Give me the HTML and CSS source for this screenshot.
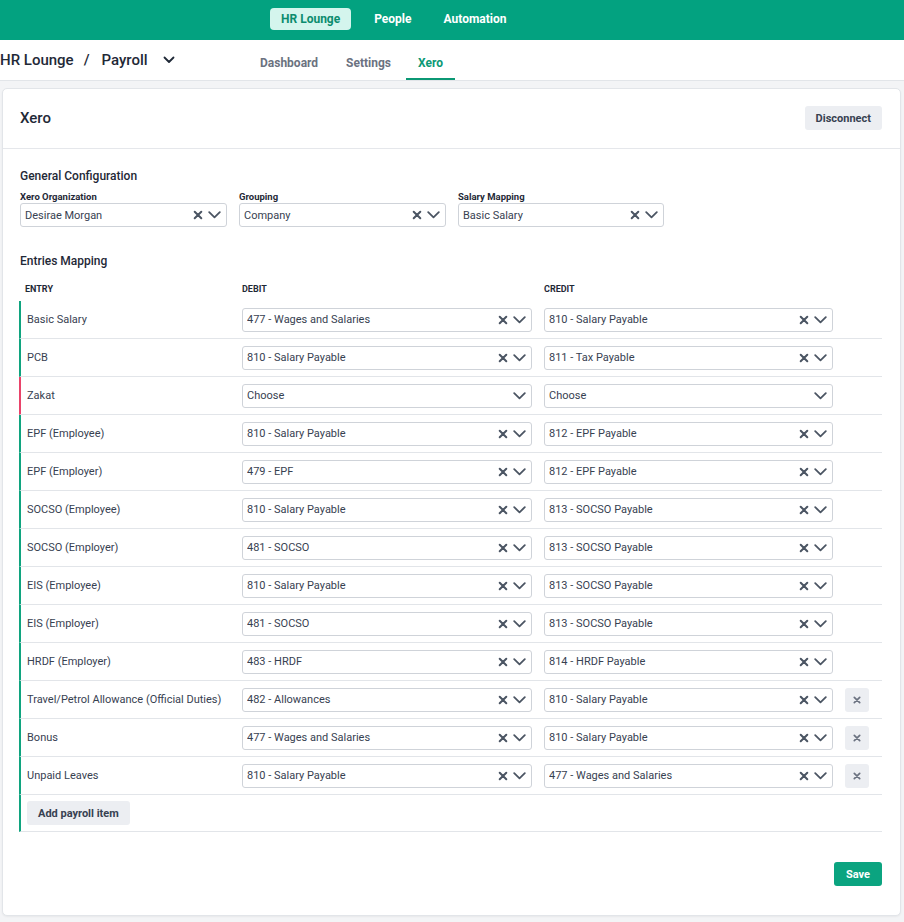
FILE: index.html
```html
<!DOCTYPE html>
<html>
<head>
<meta charset="utf-8">
<link rel="stylesheet" href="styles.css">
</head>
<body>
<header class="topbar">
  <nav class="mainnav">
    <span class="navitem active">HR Lounge</span>
    <span class="navitem">People</span>
    <span class="navitem">Automation</span>
  </nav>
</header>
<div class="subbar">
  <div class="crumbs">
    <span>HR Lounge</span><span class="sep">/</span><span>Payroll</span>
    <svg class="crumb-chev" width="12" height="8" viewBox="0 0 12 8"><polyline points="1.5,1.5 6,6 10.5,1.5" fill="none" stroke="#1f2937" stroke-width="1.8" stroke-linecap="round" stroke-linejoin="round"/></svg>
  </div>
  <div class="tabs">
    <span class="tab">Dashboard</span>
    <span class="tab">Settings</span>
    <span class="tab active">Xero</span>
  </div>
</div>
<main class="page">
  <section class="card">
    <div class="card-head">
      <h2>Xero</h2>
      <button class="btn btn-gray">Disconnect</button>
    </div>
    <div class="card-body">
      <h3>General Configuration</h3>
      <div class="config">
        <div class="field">
          <label>Xero Organization</label>
          <div class="select"><span>Desirae Morgan</span><i class="ic-x"></i><i class="ic-chev"></i></div>
        </div>
        <div class="field">
          <label>Grouping</label>
          <div class="select"><span>Company</span><i class="ic-x"></i><i class="ic-chev"></i></div>
        </div>
        <div class="field">
          <label>Salary Mapping</label>
          <div class="select"><span>Basic Salary</span><i class="ic-x"></i><i class="ic-chev"></i></div>
        </div>
      </div>
      <h3 class="mt">Entries Mapping</h3>
      <div class="grid head">
        <span>Entry</span><span>Debit</span><span>Credit</span><span></span>
      </div>
      <div class="rows" id="rows"></div>
      <div class="footer">
        <button class="btn btn-green">Save</button>
      </div>
    </div>
  </section>
</main>
<script src="app.js"></script>
</body>
</html>
```
FILE: app.js
```js
var data = [
  ["Basic Salary","477 - Wages and Salaries","810 - Salary Payable",0,0],
  ["PCB","810 - Salary Payable","811 - Tax Payable",0,0],
  ["Zakat","","",0,1],
  ["EPF (Employee)","810 - Salary Payable","812 - EPF Payable",0,0],
  ["EPF (Employer)","479 - EPF","812 - EPF Payable",0,0],
  ["SOCSO (Employee)","810 - Salary Payable","813 - SOCSO Payable",0,0],
  ["SOCSO (Employer)","481 - SOCSO","813 - SOCSO Payable",0,0],
  ["EIS (Employee)","810 - Salary Payable","813 - SOCSO Payable",0,0],
  ["EIS (Employer)","481 - SOCSO","813 - SOCSO Payable",0,0],
  ["HRDF (Employer)","483 - HRDF","814 - HRDF Payable",0,0],
  ["Travel/Petrol Allowance (Official Duties)","482 - Allowances","810 - Salary Payable",1,0],
  ["Bonus","477 - Wages and Salaries","810 - Salary Payable",1,0],
  ["Unpaid Leaves","810 - Salary Payable","477 - Wages and Salaries",1,0]
];
function sel(v){
  if(!v) return '<div class="select"><span>Choose</span><i class="ic-chev"></i></div>';
  return '<div class="select"><span>'+v+'</span><i class="ic-x"></i><i class="ic-chev"></i></div>';
}
var h = '';
data.forEach(function(r){
  h += '<div class="grid row'+(r[4]?' warn':'')+'"><span class="entry">'+r[0]+'</span>'+sel(r[1])+sel(r[2])+
    (r[3]?'<button class="del"><i class="ic-del"></i></button>':'<span></span>')+'</div>';
});
h += '<div class="row addrow"><button class="btn btn-gray add">Add payroll item</button></div>';
document.getElementById('rows').innerHTML = h;
```
FILE: styles.css
```css
* { box-sizing: border-box; }
html, body { margin: 0; padding: 0; }
body {
  font-family: Roboto, "Liberation Sans", Arial, sans-serif;
  background: #f3f4f6;
  color: #374151;
  width: 904px;
  height: 922px;
  overflow: hidden;
}
.topbar {
  height: 40px;
  background: #03a280;
  display: flex;
  align-items: center;
  padding-left: 270px;
  padding-bottom: 2px;
}
.mainnav { display: flex; gap: 10px; align-items: center; }
.navitem {
  font-size: 12px;
  font-weight: 700;
  color: #fff;
  padding: 4px 11px;
  border-radius: 4px;
  line-height: 14px;
}
.navitem.active { background: #d4f5ed; color: #0b8c6e; margin-right: 2px; }
.subbar {
  height: 41px;
  background: #fff;
  border-bottom: 1px solid #e2e5e9;
  display: flex;
  align-items: stretch;
}
.crumbs {
  width: 260px;
  display: flex;
  align-items: center;
  font-size: 15px;
  font-weight: 500;
  color: #1f2937;
  padding-bottom: 1px;
}
.crumbs .sep { margin: 0 12px 0 10px; }
.crumb-chev { margin-left: 15px; }
.tabs { display: flex; align-items: stretch; gap: 0; }
.tab {
  font-size: 12px;
  font-weight: 700;
  color: #6b7280;
  display: flex;
  align-items: center;
  padding: 7px 0 0 0;
  margin-right: 28px;
  border-bottom: 2px solid transparent;
}
.tab.active {
  color: #0b9874;
  border-bottom-color: #0b9874;
  padding: 7px 12px 0;
  margin-left: -13px;
}
.page { padding: 7px 3px 6px 2px; }
.card {
  background: #fff;
  border: 1px solid #e2e5e9;
  border-radius: 5px;
  height: 828px;
  box-shadow: 0 1px 2px rgba(0,0,0,0.05);
}
.card-head {
  height: 60px;
  border-bottom: 1px solid #e5e7eb;
  display: flex;
  align-items: center;
  justify-content: space-between;
  padding: 0 18px 1px 17px;
}
.card-head h2 {
  margin: 0;
  font-size: 15px;
  font-weight: 500;
  color: #1f2937;
}
.btn {
  font-family: inherit;
  border: 0;
  border-radius: 3px;
  font-size: 11px;
  font-weight: 700;
  height: 24px;
  padding: 0 11px;
  cursor: pointer;
}
.btn-gray { background: #eceef2; color: #374151; }
.btn-green { background: #0ba480; color: #fff; padding: 0 12px; }
.card-body { padding: 19px 18px 0 17px; }
h3 {
  margin: 0;
  font-size: 12px;
  font-weight: 500;
  line-height: 16px;
  color: #1f2937;
}
h3.mt { margin-top: 26px; }
.config {
  display: grid;
  grid-template-columns: 207px 207px 206px;
  column-gap: 12px;
  margin-top: 7px;
}
.field label {
  display: block;
  font-size: 9.5px;
  font-weight: 700;
  color: #1f2937;
  line-height: 12px;
  margin-bottom: 0;
}
.select {
  height: 24px;
  border: 1px solid #cfd3d9;
  border-radius: 3px;
  background: #fff;
  display: flex;
  align-items: center;
  padding: 0 5px 0 4px;
  font-size: 11px;
  color: #374151;
}
.select span { flex: 1; white-space: nowrap; overflow: hidden; }
.ic-x, .ic-chev, .ic-del { display: block; flex: none; background-repeat: no-repeat; background-position: center; }
.ic-x {
  width: 10px; height: 10px; margin-right: 5px;
  background-image: url("data:image/svg+xml,%3Csvg xmlns='http://www.w3.org/2000/svg' width='10' height='10' viewBox='0 0 10 10'%3E%3Cpath d='M1.7 1.7L8.3 8.3M8.3 1.7L1.7 8.3' stroke='%234b5563' stroke-width='2' stroke-linecap='round'/%3E%3C/svg%3E");
}
.ic-chev {
  width: 13px; height: 8px;
  background-image: url("data:image/svg+xml,%3Csvg xmlns='http://www.w3.org/2000/svg' width='13' height='8' viewBox='0 0 13 8'%3E%3Cpath d='M1.2 1.2L6.5 6.3L11.8 1.2' fill='none' stroke='%234b5563' stroke-width='1.8' stroke-linecap='round' stroke-linejoin='round'/%3E%3C/svg%3E");
}
.ic-del {
  width: 8px; height: 8px; margin: 0 auto;
  background-image: url("data:image/svg+xml,%3Csvg xmlns='http://www.w3.org/2000/svg' width='8' height='8' viewBox='0 0 8 8'%3E%3Cpath d='M1.3 1.3L6.7 6.7M6.7 1.3L1.3 6.7' stroke='%236b7280' stroke-width='1.7' stroke-linecap='round'/%3E%3C/svg%3E");
}
.grid {
  display: grid;
  grid-template-columns: 1fr 290px 289px 24px;
  column-gap: 12px;
  padding-right: 13px;
  align-items: center;
}
.head {
  margin-top: 14px;
  padding-left: 6px;
  font-size: 9px;
  font-weight: 700;
  text-transform: uppercase;
  color: #1f2937;
  line-height: 12px;
  margin-left: -1px;
}
.rows { margin-top: 6px; margin-left: -1px; }
.row {
  height: 38px;
  border-left: 2px solid #10a47f;
  border-bottom: 1px solid #e2e5e9;
  padding-left: 6px;
}
.row.warn { border-left-color: #e9436a; }
.entry { font-size: 11px; color: #374151; white-space: nowrap; }
.del {
  width: 24px; height: 24px;
  border: 0; border-radius: 3px;
  background: #eceef2;
  padding: 0;
  display: flex;
  align-items: center;
  justify-content: center;
}
.addrow { height: 37px; display: flex; align-items: center; }
.add { padding: 0 11px; }
.footer {
  display: flex;
  justify-content: flex-end;
  margin-top: 30px;
}
```
